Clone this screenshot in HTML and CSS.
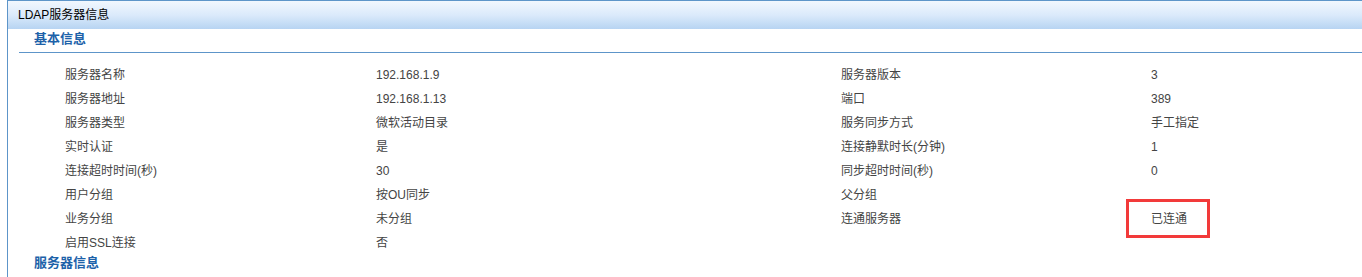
FILE: index.html
```html
<!DOCTYPE html>
<html lang="zh-CN">
<head>
<meta charset="utf-8">
<title>LDAP服务器信息</title>
<link rel="stylesheet" href="styles.css">
</head>
<body>
<div class="panel">
  <div class="panel-header">LDAP服务器信息</div>
  <div class="section-title">基本信息</div>
  <div class="separator"></div>
  <div class="info-grid">
    <div class="cell">服务器名称</div><div class="cell">192.168.1.9</div><div class="cell">服务器版本</div><div class="cell">3</div>
    <div class="cell">服务器地址</div><div class="cell">192.168.1.13</div><div class="cell">端口</div><div class="cell">389</div>
    <div class="cell">服务器类型</div><div class="cell">微软活动目录</div><div class="cell">服务同步方式</div><div class="cell">手工指定</div>
    <div class="cell">实时认证</div><div class="cell">是</div><div class="cell">连接静默时长(分钟)</div><div class="cell">1</div>
    <div class="cell">连接超时时间(秒)</div><div class="cell">30</div><div class="cell">同步超时时间(秒)</div><div class="cell">0</div>
    <div class="cell">用户分组</div><div class="cell">按OU同步</div><div class="cell">父分组</div><div class="cell"></div>
    <div class="cell">业务分组</div><div class="cell">未分组</div><div class="cell">连通服务器</div><div class="cell highlight"><span class="mark"></span>已连通</div>
    <div class="cell">启用SSL连接</div><div class="cell">否</div><div class="cell"></div><div class="cell"></div>
  </div>
  <div class="section-title last">服务器信息</div>
</div>
</body>
</html>
```
FILE: styles.css
```css
html, body {
  margin: 0;
  padding: 0;
  background: #fff;
  overflow: hidden;
}
body {
  font-family: "Liberation Sans", "Noto Sans CJK SC", sans-serif;
  font-size: 12px;
  color: #444;
}
.panel {
  margin-left: 7px;
  width: 1400px;
  min-height: 276px;
  border-left: 1px solid #5d95c9;
  border-top: 1px solid #5d95c9;
}
.panel-header {
  height: 28px;
  line-height: 28px;
  padding-left: 10px;
  color: #000;
  background: linear-gradient(to bottom, #f1f7fe 0%, #dbeafb 50%, #b7d4f2 100%);
}
.section-title {
  padding-left: 26px;
  height: 20px;
  line-height: 20px;
  padding-bottom: 2px;
  font-size: 13px;
  font-weight: bold;
  color: #1d62a9;
}
.separator {
  margin-left: 11px;
  height: 0;
  border-top: 1px solid #5d95c9;
  margin-top: 1px;
  margin-bottom: 10px;
}
.info-grid {
  display: grid;
  grid-template-columns: 311px 465px 310px 1fr;
  grid-auto-rows: 24px;
  padding-left: 57px;
}
.cell {
  line-height: 24px;
  white-space: nowrap;
}
.highlight {
  position: relative;
}
.mark {
  position: absolute;
  left: -25px;
  top: -8px;
  width: 78px;
  height: 33px;
  border: 3px solid #f23a3a;
}
.section-title.last {
  height: 16px;
  line-height: 16px;
  padding-bottom: 0;
}
```
